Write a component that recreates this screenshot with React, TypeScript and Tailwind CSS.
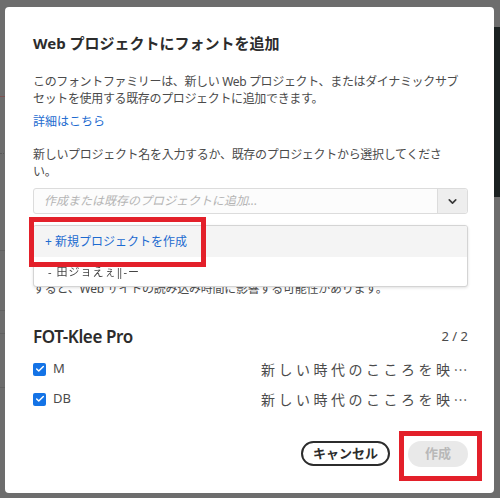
import { Check, ChevronDown } from "lucide-react";

const jp = { fontFamily: '"Noto Sans", "Noto Sans CJK JP", sans-serif' };

function FontRow({ label }: { label: string }) {
    return (
        <div className="flex items-center h-[30px]">
            <span className="w-[13px] h-[13px] rounded-[2px] bg-[#1473e6] flex items-center justify-center">
                <Check size={10} strokeWidth={3.5} className="text-white" />
            </span>
            <span className="ml-[7px] text-[13px] text-[#4b4b4b]">{label}</span>
            <span className="ml-auto font-['Noto_Sans_CJK_JP',sans-serif] text-[14px] text-[#4b4b4b] tracking-[3.5px] mr-[-3px] whitespace-nowrap">
                新しい時代のこころを映…
            </span>
        </div>
    );
}

export default function App() {
    return (
        <div className="relative w-[500px] h-[498px] overflow-hidden bg-[#6d6d6d]" style={jp}>
            {/* page behind the dialog */}
            <div className="flex h-full">
                <div className="flex-1 flex flex-col">
                    <div className="h-[96px]" />
                    <div className="h-px bg-[#7d5252]" />
                    <div className="h-[56px]" />
                    <div className="h-px border-t border-dotted border-[#5a5a5a]" />
                    <div className="h-[96px]" />
                    <div className="h-px bg-[#626262]" />
                    <div className="h-[59px]" />
                    <div className="h-px bg-[#626262]" />
                    <div className="h-[22px]" />
                    <div className="h-px bg-[#626262]" />
                    <div className="h-[53px]" />
                    <div className="h-px bg-[#626262]" />
                </div>
                <div className="w-[6px] flex flex-col">
                    <div className="h-[27px]" />
                    <div className="h-[170px] bg-[#1b2121]" />
                </div>
            </div>

            {/* dialog */}
            <div className="absolute left-[5px] top-[7px] w-[489px] h-[486px] bg-white rounded-[4px] pl-[28px] pr-[26px] pt-[26px] text-[#4b4b4b]">
                <h2 className="text-[15px] leading-[20px] font-bold text-[#2c2c2c] whitespace-nowrap">
                    Web プロジェクトにフォントを追加
                </h2>

                <p className="mt-[20px] text-[12px] leading-[17px] tracking-[-0.35px] whitespace-nowrap">
                    このフォントファミリーは、新しい Web プロジェクト、またはダイナミックサブ
                    <br />
                    セットを使用する既存のプロジェクトに追加できます。
                </p>
                <a className="block mt-[6px] text-[12px] leading-[17px] text-[#1d6bd0]">詳細はこちら</a>

                <p className="mt-[16px] text-[12px] leading-[17px] tracking-[-0.3px] whitespace-nowrap">
                    新しいプロジェクト名を入力するか、既存のプロジェクトから選択してくださ
                    <br />
                    い。
                </p>

                <div className="relative mt-[8px]">
                    <div className="flex h-[26px] border border-[#dcdcdc] rounded-[3px] bg-[#fcfcfc]">
                        <span className="flex-1 px-[10px] flex items-center text-[12px] italic text-[#b5b5b5] whitespace-nowrap">
                            作成または既存のプロジェクトに追加...
                        </span>
                        <span className="w-[30px] flex items-center justify-center border-l border-[#dcdcdc] bg-[#eeeeee] rounded-r-[3px]">
                            <ChevronDown size={13} strokeWidth={3} className="text-[#3a3a3a]" />
                        </span>
                    </div>

                    <div className="absolute left-0 right-0 top-[37px] z-10 h-[62px] bg-white border border-[#d4d4d4] rounded-[3px] shadow-[0_1px_3px_rgba(0,0,0,0.12)] overflow-hidden">
                        <div className="h-[31px] bg-[#f4f4f4] flex items-center px-[11px] text-[12px] text-[#1d6bd0] whitespace-nowrap">
                            + 新規プロジェクトを作成
                        </div>
                        <div className="h-[30px] flex items-center px-[14px] text-[11px] text-[#444] blur-[0.7px] tracking-[1px]">
                            ‐ 田ジョえぇ‖‐ー
                        </div>
                    </div>

                    <p className="mt-[32px] text-[12px] leading-[17px] tracking-[-0.25px] whitespace-nowrap">
                        Web プロジェクトに多くのフォントを追加すると、ページのサイズが
                        <br />
                        大きくなります。フォントファイルのサイズが大きいフォントを追加
                        <br />
                        すると、Web サイトの読み込み時間に影響する可能性があります。
                    </p>
                </div>

                <div className="mt-[29px] flex items-center justify-between">
                    <h3 className="text-[17px] leading-[22px] font-semibold text-[#2c2c2c] tracking-[-0.4px]">FOT-Klee Pro</h3>
                    <span className="text-[13px] text-[#4b4b4b]">2 / 2</span>
                </div>

                <div className="mt-[6px] flex flex-col">
                    <FontRow label="M" />
                    <FontRow label="DB" />
                </div>

                <div className="mt-[27px] flex justify-end gap-[18px]">
                    <button className="w-[89px] h-[25px] rounded-full border-2 border-[#2c2c2c] text-[13px] font-bold text-[#2c2c2c] flex items-center justify-center">
                        キャンセル
                    </button>
                    <button className="w-[60px] h-[26px] rounded-full bg-[#e9e9e9] text-[13px] font-bold text-[#b8b8b8] flex items-center justify-center">
                        作成
                    </button>
                </div>

                {/* annotation boxes */}
                <div className="absolute left-[24px] top-[210px] w-[177px] h-[50px] border-[5px] border-[#e3202a] z-20" />
                <div className="absolute left-[394px] top-[424px] w-[83px] h-[50px] border-[5px] border-[#e3202a] z-20" />
            </div>
        </div>
    );
}
